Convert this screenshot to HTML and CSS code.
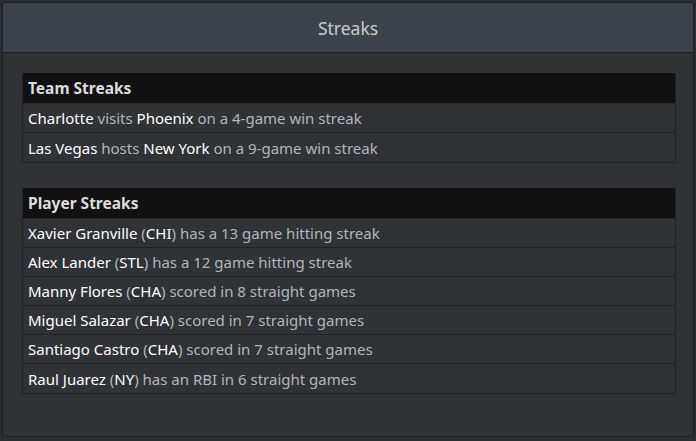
FILE: index.html
```html
<!DOCTYPE html>
<html>
<head>
<meta charset="utf-8">
<link rel="stylesheet" href="styles.css">
</head>
<body>
<div class="window">
  <div class="titlebar">Streaks</div>
  <div class="content">
    <div class="table">
      <div class="thead">Team Streaks</div>
      <div class="row"><span class="hl">Charlotte</span> visits <span class="hl">Phoenix</span> on a 4-game win streak</div>
      <div class="row"><span class="hl">Las Vegas</span> hosts <span class="hl">New York</span> on a 9-game win streak</div>
    </div>
    <div class="table">
      <div class="thead">Player Streaks</div>
      <div class="row"><span class="hl">Xavier Granville</span> (<span class="hl">CHI</span>) has a 13 game hitting streak</div>
      <div class="row"><span class="hl">Alex Lander</span> (<span class="hl">STL</span>) has a 12 game hitting streak</div>
      <div class="row"><span class="hl">Manny Flores</span> (<span class="hl">CHA</span>) scored in 8 straight games</div>
      <div class="row"><span class="hl">Miguel Salazar</span> (<span class="hl">CHA</span>) scored in 7 straight games</div>
      <div class="row"><span class="hl">Santiago Castro</span> (<span class="hl">CHA</span>) scored in 7 straight games</div>
      <div class="row"><span class="hl">Raul Juarez</span> (<span class="hl">NY</span>) has an RBI in 6 straight games</div>
    </div>
  </div>
</div>
</body>
</html>
```
FILE: styles.css
```css
html, body {
  margin: 0;
  padding: 0;
  background: #2a2d32;
  font-family: "Noto Sans", "Open Sans", sans-serif;
}
.window {
  margin: 2px;
  height: 435px;
  box-sizing: border-box;
  border: 1px solid #1c1f23;
  border-radius: 3px;
  background: #2f3237;
  display: flex;
  flex-direction: column;
  overflow: hidden;
}
.titlebar {
  height: 49px;
  background: #3d434c;
  border-bottom: 1px solid #1e2126;
  color: #c9cbce;
  font-size: 17.5px;
  display: flex;
  align-items: center;
  justify-content: center;
}
.content {
  padding: 20px 17px 0 19px;
  display: flex;
  flex-direction: column;
  gap: 25px;
}
.table {
  border: 1px solid #1f2226;
  border-top: none;
}
.thead {
  height: 30px;
  background: #111111;
  color: #dcdcdc;
  font-weight: bold;
  font-size: 15.5px;
  padding-left: 5px;
  display: flex;
  align-items: center;
  border-bottom: 1px solid #24272b;
}
.row {
  height: 28px;
  border-top: 1px solid #1f2226;
  color: #b3b6ba;
  font-size: 15px;
  padding-left: 5px;
  display: flex;
  align-items: center;
  white-space: pre;
}
.thead + .row { border-top: none; }
.table .row:last-child { height: 29px; }
.hl { color: #ffffff; }
```
